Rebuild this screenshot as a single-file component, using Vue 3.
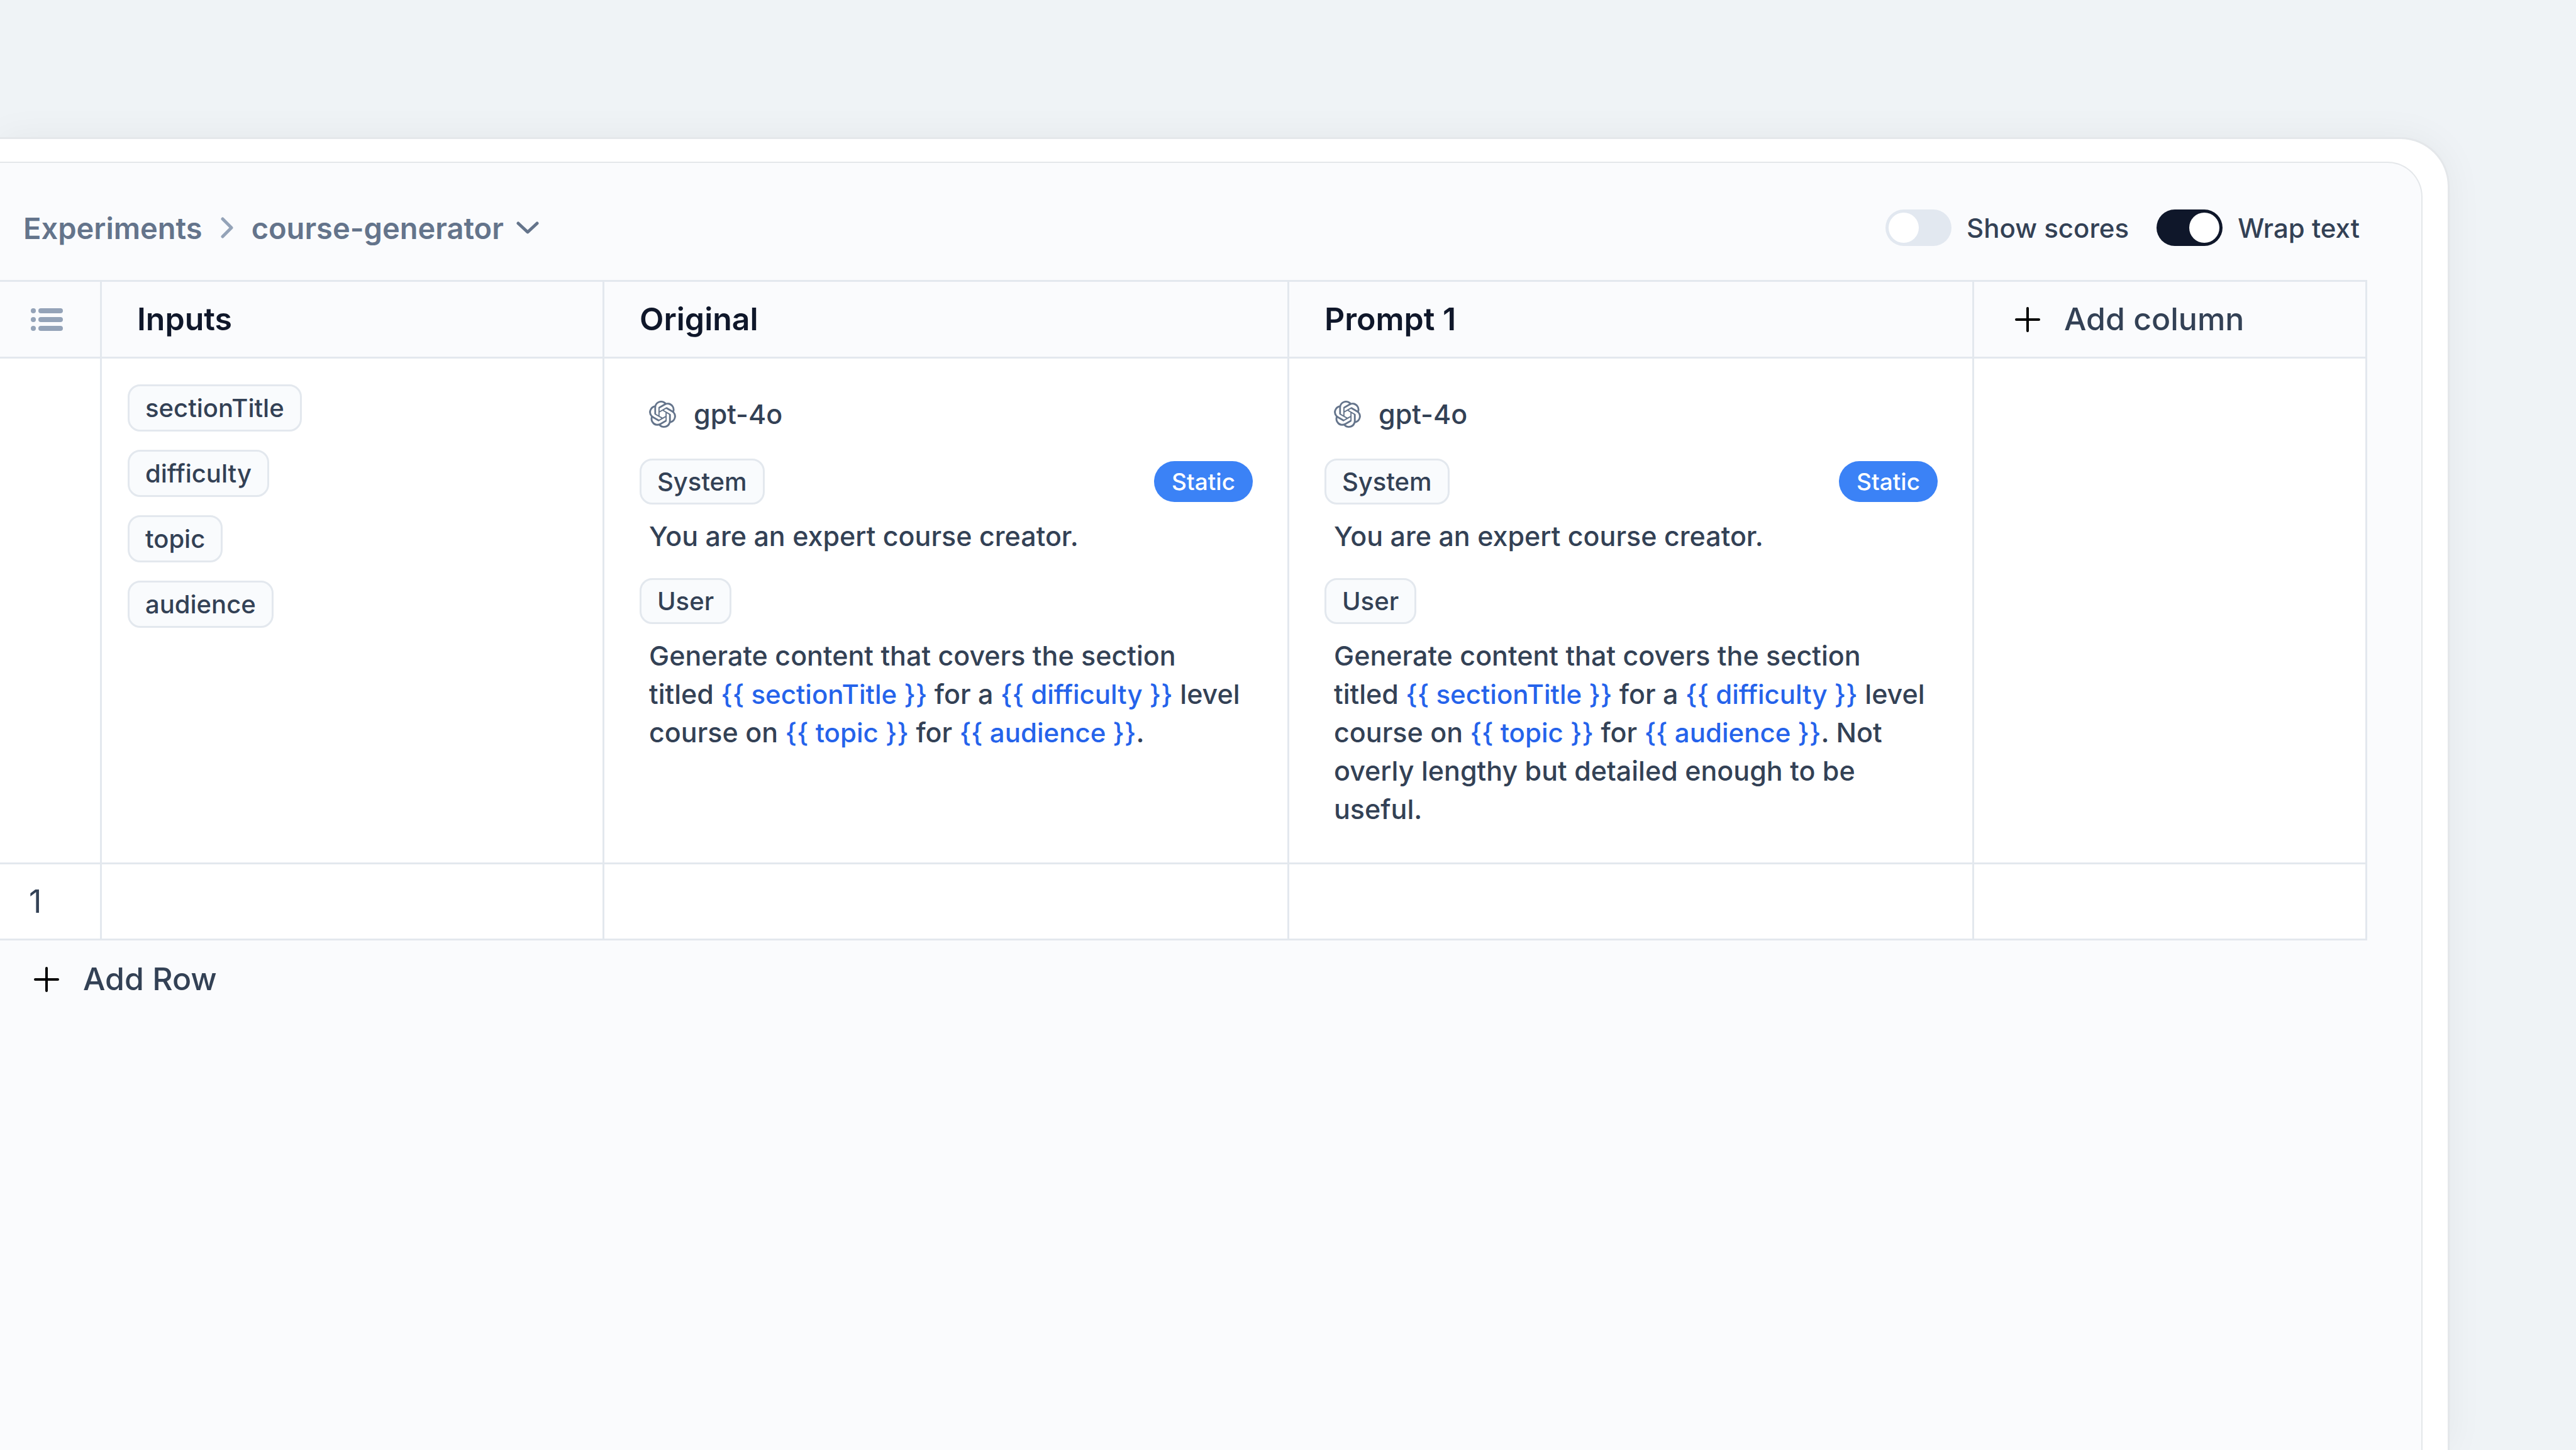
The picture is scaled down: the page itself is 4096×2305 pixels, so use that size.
<script setup>
import { ref } from 'vue'

const showScores = ref(false)
const wrapText = ref(true)

const inputs = ['sectionTitle', 'difficulty', 'topic', 'audience']

const userPrompt =
  'Generate content that covers the section titled {{ sectionTitle }} for a {{ difficulty }} level course on {{ topic }} for {{ audience }}.'

const split = (text) =>
  text
    .split(/(\{\{ \w+ \}\})/)
    .filter(Boolean)
    .map((part) => ({ text: part, variable: part.startsWith('{{') }))

const prompts = [
  { name: 'Original', user: split(userPrompt) },
  {
    name: 'Prompt 1',
    user: split(userPrompt + ' Not overly lengthy but detailed enough to be useful.'),
  },
]
</script>

<template>
  <div class="page">
    <div class="frame">
      <main class="panel">
        <header class="toolbar">
          <nav class="crumbs" aria-label="Breadcrumb">
            <a href="#experiments">Experiments</a>
            <svg class="crumb-sep" viewBox="0 0 20 34" aria-hidden="true">
              <path d="M3 3 L17 17 L3 31" />
            </svg>
            <button type="button" class="crumb-menu">
              course-generator
              <svg class="crumb-caret" viewBox="0 0 36 20" aria-hidden="true">
                <path d="M3 3 L18 17 L33 3" />
              </svg>
            </button>
          </nav>
          <div class="toggles">
            <label class="toggle">
              <input v-model="showScores" type="checkbox" role="switch" />
              <span>Show scores</span>
            </label>
            <label class="toggle">
              <input v-model="wrapText" type="checkbox" role="switch" />
              <span>Wrap text</span>
            </label>
          </div>
        </header>

        <table class="grid">
          <colgroup>
            <col class="col-rail" />
            <col class="col-inputs" />
            <col v-for="p in prompts" :key="p.name" />
            <col class="col-add" />
          </colgroup>
          <thead>
            <tr>
              <th class="rail" aria-label="Row">
                <svg class="list-icon" viewBox="0 0 52 36" aria-hidden="true">
                  <g fill="currentColor">
                    <circle cx="4" cy="4" r="4" />
                    <circle cx="4" cy="18" r="4" />
                    <circle cx="4" cy="32" r="4" />
                    <rect x="12" y="0" width="39" height="8" rx="4" />
                    <rect x="12" y="14" width="39" height="8" rx="4" />
                    <rect x="12" y="28" width="39" height="8" rx="4" />
                  </g>
                </svg>
              </th>
              <th>Inputs</th>
              <th v-for="p in prompts" :key="p.name">{{ p.name }}</th>
              <th class="add-cell">
                <button type="button" class="add">
                  <svg class="plus" viewBox="0 0 40 40" aria-hidden="true">
                    <path d="M20 2 V38 M2 20 H38" />
                  </svg>
                  Add column
                </button>
              </th>
            </tr>
          </thead>
          <tbody>
            <tr class="prompt-row">
              <td></td>
              <td>
                <ul class="inputs">
                  <li v-for="name in inputs" :key="name" class="chip">{{ name }}</li>
                </ul>
              </td>
              <td v-for="p in prompts" :key="p.name">
                <div class="prompt">
                  <div class="model">
                    <svg class="logo" viewBox="0 0 24 24" aria-hidden="true">
                      <path
                        fill="currentColor"
                        d="M22.2819 9.8211a5.9847 5.9847 0 0 0-.5157-4.9108 6.0462 6.0462 0 0 0-6.5098-2.9A6.0651 6.0651 0 0 0 4.9807 4.1818a5.9847 5.9847 0 0 0-3.9977 2.9 6.0462 6.0462 0 0 0 .7427 7.0966 5.98 5.98 0 0 0 .511 4.9107 6.051 6.051 0 0 0 6.5146 2.9001A5.9847 5.9847 0 0 0 13.2599 24a6.0557 6.0557 0 0 0 5.7718-4.2058 5.9894 5.9894 0 0 0 3.9977-2.9001 6.0557 6.0557 0 0 0-.7475-7.0729zm-9.022 12.6081a4.4755 4.4755 0 0 1-2.8764-1.0408l.1419-.0804 4.7783-2.7582a.7948.7948 0 0 0 .3927-.6813v-6.7369l2.02 1.1686a.071.071 0 0 1 .038.052v5.5826a4.504 4.504 0 0 1-4.4945 4.4944zm-9.6607-4.1254a4.4708 4.4708 0 0 1-.5346-3.0137l.142.0852 4.783 2.7582a.7712.7712 0 0 0 .7806 0l5.8428-3.3685v2.3324a.0804.0804 0 0 1-.0332.0615L9.74 19.9502a4.4992 4.4992 0 0 1-6.1408-1.6464zM2.3408 7.8956a4.485 4.485 0 0 1 2.3655-1.9728V11.6a.7664.7664 0 0 0 .3879.6765l5.8144 3.3543-2.0201 1.1685a.0757.0757 0 0 1-.071 0l-4.8303-2.7865A4.504 4.504 0 0 1 2.3408 7.872zm16.5963 3.8558L13.1038 8.364 15.1192 7.2a.0757.0757 0 0 1 .071 0l4.8303 2.7913a4.4944 4.4944 0 0 1-.6765 8.1042v-5.6772a.79.79 0 0 0-.407-.667zm2.0107-3.0231l-.142-.0852-4.7735-2.7818a.7759.7759 0 0 0-.7854 0L9.409 9.2297V6.8974a.0662.0662 0 0 1 .0284-.0615l4.8303-2.7866a4.4992 4.4992 0 0 1 6.6802 4.66zM8.3065 12.863l-2.02-1.1638a.0804.0804 0 0 1-.038-.0567V6.0742a4.4992 4.4992 0 0 1 7.3757-3.4537l-.142.0805L8.704 5.459a.7948.7948 0 0 0-.3927.6813zm1.0976-2.3654l2.602-1.4998 2.6069 1.4998v2.9994l-2.5974 1.4997-2.6067-1.4997Z"
                      />
                    </svg>
                    gpt-4o
                  </div>
                  <div class="role">
                    <span class="chip">System</span>
                    <span class="badge">Static</span>
                  </div>
                  <p class="message">You are an expert course creator.</p>
                  <div class="role">
                    <span class="chip">User</span>
                  </div>
                  <p class="message">
                    <template v-for="(part, i) in p.user" :key="i"><span v-if="part.variable" class="variable">{{ part.text }}</span><template v-else>{{ part.text }}</template></template>
                  </p>
                </div>
              </td>
              <td></td>
            </tr>
            <tr class="data-row">
              <td class="index">1</td>
              <td></td>
              <td v-for="p in prompts" :key="p.name"></td>
              <td></td>
            </tr>
          </tbody>
        </table>

        <button type="button" class="add add-row">
          <svg class="plus" viewBox="0 0 40 40" aria-hidden="true">
            <path d="M20 2 V38 M2 20 H38" />
          </svg>
          Add Row
        </button>
      </main>
    </div>
  </div>
</template>

<style>
body {
  margin: 0;
  background: #eff3f6;
}
</style>

<style scoped>
.page {
  --line: #e3e8ee;
  --text: #334155;
  display: flex;
  box-sizing: border-box;
  min-height: 100vh;
  padding: 218px 201px 0 0;
  overflow: hidden;
  background: #eff3f6;
  color: var(--text);
  font-family: Inter, 'Liberation Sans', sans-serif;
  font-size: 43px;
  font-weight: 500;
  line-height: 61px;
}

.frame {
  display: flex;
  flex: 1;
  min-width: 0;
  padding: 36px 40px 0 0;
  border: 3px solid #e4e7ea;
  border-width: 3px 3px 0 0;
  border-radius: 0 78px 0 0;
  background: #fff;
  background-clip: padding-box;
  box-shadow: 0 0 60px rgba(15, 23, 42, 0.05);
}

.panel {
  flex: 1;
  min-width: 0;
  border: 2px solid #e4e7ea;
  border-width: 2px 2px 0 0;
  border-radius: 0 56px 0 0;
  background: #fafbfd;
}

button {
  padding: 0;
  border: 0;
  background: none;
  color: inherit;
  font: inherit;
  cursor: pointer;
}

.toolbar {
  display: flex;
  align-items: center;
  justify-content: space-between;
  height: 166px;
  padding: 20px 98px 0 37px;
}

.crumbs {
  display: flex;
  align-items: center;
  gap: 29px;
  color: #64748b;
  font-size: 47px;
  font-weight: 600;
}

.crumbs a {
  color: inherit;
  text-decoration: none;
}

.crumb-menu {
  display: flex;
  align-items: center;
  gap: 20px;
}

.crumbs svg {
  fill: none;
  stroke: currentColor;
  stroke-width: 5;
  stroke-linecap: round;
  stroke-linejoin: round;
}

.crumb-sep {
  width: 20px;
  height: 34px;
  color: #94a3b8;
}

.crumb-caret {
  width: 36px;
  height: 20px;
}

.toggles {
  display: flex;
  gap: 44px;
}

.toggle {
  display: flex;
  align-items: center;
  gap: 24px;
  font-size: 42px;
}

.toggle input {
  display: flex;
  align-items: center;
  box-sizing: border-box;
  width: 105px;
  height: 58px;
  margin: 0;
  padding: 0 5px;
  border-radius: 29px;
  background: #e2e8f0;
  appearance: none;
}

.toggle input::before {
  width: 48px;
  height: 48px;
  border-radius: 50%;
  background: #fff;
  content: '';
}

.toggle input:checked {
  justify-content: flex-end;
  background: #0f172a;
}

.grid {
  width: calc(100% - 86px);
  table-layout: fixed;
  border-collapse: separate;
  border-spacing: 0;
  border-top: 3px solid var(--line);
}

.col-rail {
  width: 162px;
}

.col-inputs {
  width: 799px;
}

.col-add {
  width: 625px;
}

th,
td {
  box-sizing: border-box;
  padding: 0;
  border-right: 3px solid var(--line);
  border-bottom: 3px solid var(--line);
  text-align: left;
}

th {
  height: 122px;
  padding-left: 56px;
  color: #0f172a;
  font-size: 50px;
  font-weight: 600;
}

th.rail {
  padding-left: 49px;
  color: #94a3b8;
}

.list-icon {
  display: block;
  width: 52px;
  height: 36px;
}

th.add-cell {
  padding-left: 65px;
}

.add {
  display: flex;
  align-items: center;
  gap: 38px;
  color: var(--text);
  font-size: 50px;
  font-weight: 500;
}

.plus {
  width: 40px;
  height: 40px;
  fill: none;
  stroke: #000;
  stroke-width: 4;
  stroke-linecap: round;
}

td {
  background: #fff;
}

.prompt-row td {
  vertical-align: top;
}

.inputs {
  display: flex;
  flex-direction: column;
  align-items: flex-start;
  gap: 29px;
  margin: 0;
  padding: 41px;
  list-style: none;
}

.chip {
  padding: 3px 25px;
  border: 3px solid var(--line);
  border-radius: 20px;
  background: #f9fbfd;
  font-size: 40px;
}

.inputs .chip {
  padding: 4px 25px;
}

.prompt {
  padding: 58px 55px 54px 56px;
}

.model {
  display: flex;
  align-items: center;
  gap: 28px;
  margin-bottom: 40px;
  padding-left: 15px;
}

.logo {
  width: 43px;
  height: 43px;
  color: #64748b;
}

.role {
  display: flex;
  align-items: center;
  justify-content: space-between;
  margin: 36px 0 20px;
}

.badge {
  padding: 2px 28px;
  border-radius: 33px;
  background: #3b82f6;
  color: #fff;
  font-size: 37px;
}

.message {
  margin: 0;
  padding: 0 16px 0 15px;
}

.variable {
  color: #2563eb;
  font-size: 42px;
}

.data-row td {
  height: 121px;
}

.index {
  padding-left: 46px;
  font-size: 50px;
  font-weight: 400;
}

.add-row {
  margin: 31px 0 0 54px;
}
</style>
